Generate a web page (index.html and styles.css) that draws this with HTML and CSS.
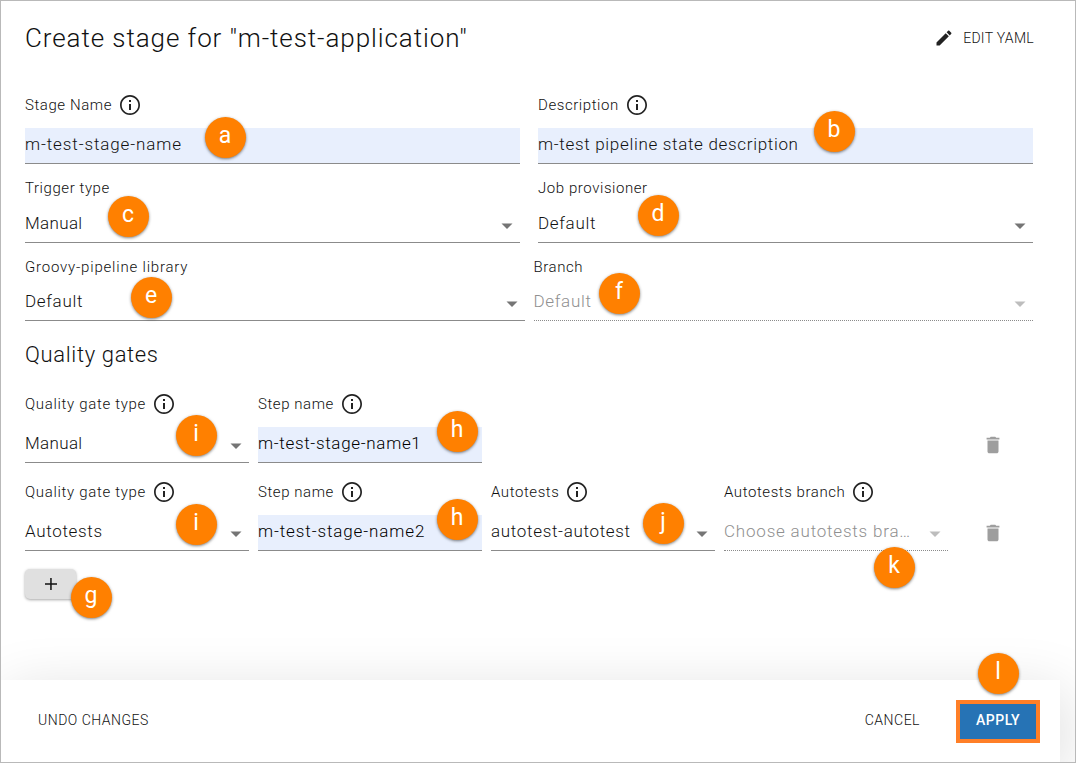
FILE: index.html
```html
<!DOCTYPE html>
<html lang="en">
<head>
<meta charset="utf-8">
<title>Create stage</title>
<link rel="stylesheet" href="styles.css">
</head>
<body>
<svg class="defs" width="0" height="0">
  <symbol id="info" viewBox="0 0 24 24"><path d="M11 7h2v2h-2zm0 4h2v6h-2zm1-9C6.48 2 2 6.48 2 12s4.480 10 10 10 10-4.480 10-10S17.520 2 12 2zm0 18.300c-4.600 0-8.300-3.700-8.300-8.300s3.700-8.300 8.300-8.300 8.300 3.700 8.300 8.300-3.700 8.300-8.300 8.300z"/></symbol>
  <symbol id="arrow" viewBox="0 0 24 24"><path d="M6.500 9.500l5.500 5.500 5.500-5.500z"/></symbol>
  <symbol id="trash" viewBox="0 0 24 24"><path d="M6 19c0 1.100.9 2 2 2h8c1.100 0 2-.9 2-2V7H6v12zM19 4h-3.500l-1-1h-5l-1 1H5v2h14V4z"/></symbol>
  <symbol id="pencil" viewBox="0 0 24 24"><path d="M3 17.250V21h3.750L17.810 9.940l-3.750-3.750L3 17.250zM20.710 7.040c.39-.39.39-1.020 0-1.410l-2.340-2.340c-.39-.39-1.020-.39-1.410 0l-1.830 1.830 3.750 3.750 1.830-1.830z"/></symbol>
</svg>
<main class="dialog">
  <header class="header">
    <h1 class="title">Create stage for "m-test-application"</h1>
    <button class="edit"><svg class="pencil"><use href="#pencil"/></svg><span>EDIT YAML</span></button>
  </header>
  <section class="form">
    <div class="row row-first">
      <div class="field"><div class="label">Stage Name<svg class="info"><use href="#info"/></svg></div><div class="control filled"><span class="t-stage">m-test-stage-name</span></div></div>
      <div class="field"><div class="label">Description<svg class="info"><use href="#info"/></svg></div><div class="control filled"><span>m-test pipeline state description</span></div></div>
    </div>
    <div class="row row-second">
      <div class="field"><div class="label">Trigger type</div><div class="control"><span class="t-short">Manual</span><svg class="arrow"><use href="#arrow"/></svg></div></div>
      <div class="field"><div class="label">Job provisioner</div><div class="control"><span>Default</span><svg class="arrow"><use href="#arrow"/></svg></div></div>
    </div>
    <div class="row row-third">
      <div class="field"><div class="label t-lib">Groovy-pipeline library</div><div class="control"><span>Default</span><svg class="arrow"><use href="#arrow"/></svg></div></div>
      <div class="field"><div class="label">Branch</div><div class="control disabled"><span>Default</span><svg class="arrow"><use href="#arrow"/></svg></div></div>
    </div>
  </section>
  <section class="gates">
    <h2 class="subtitle">Quality gates</h2>
    <div class="gate">
      <div class="field"><div class="label t-type">Quality gate type<svg class="info"><use href="#info"/></svg></div><div class="control"><span class="t-short">Manual</span><svg class="arrow"><use href="#arrow"/></svg></div></div>
      <div class="field"><div class="label">Step name<svg class="info"><use href="#info"/></svg></div><div class="control filled strong"><span>m-test-stage-name1</span></div></div>
      <svg class="trash"><use href="#trash"/></svg>
    </div>
    <div class="gate">
      <div class="field"><div class="label t-type">Quality gate type<svg class="info"><use href="#info"/></svg></div><div class="control"><span>Autotests</span><svg class="arrow"><use href="#arrow"/></svg></div></div>
      <div class="field"><div class="label">Step name<svg class="info"><use href="#info"/></svg></div><div class="control filled strong"><span class="t-stage">m-test-stage-name2</span></div></div>
      <div class="field"><div class="label">Autotests<svg class="info"><use href="#info"/></svg></div><div class="control"><span>autotest-autotest</span><svg class="arrow"><use href="#arrow"/></svg></div></div>
      <div class="field"><div class="label">Autotests branch<svg class="info"><use href="#info"/></svg></div><div class="control disabled"><span class="t-choose">Choose autotests bra…</span><svg class="arrow"><use href="#arrow"/></svg></div></div>
      <svg class="trash"><use href="#trash"/></svg>
    </div>
    <button class="add"><svg class="plus" viewBox="0 0 14 14"><path d="M6.200 1h1.500v5.200H13v1.500H7.700V13H6.200V7.700H1V6.200h5.200z"/></svg></button>
  </section>
  <footer class="footer">
    <button class="action undo">UNDO CHANGES</button>
    <button class="action cancel">CANCEL</button>
    <button class="action apply">APPLY</button>
  </footer>
  <span class="badge a">a</span><span class="badge b">b</span><span class="badge c">c</span><span class="badge d">d</span>
  <span class="badge e">e</span><span class="badge f">f</span><span class="badge g">g</span><span class="badge h1">h</span>
  <span class="badge h2">h</span><span class="badge i1">i</span><span class="badge i2">i</span><span class="badge j">j</span>
  <span class="badge k">k</span><span class="badge l">l</span>
</main>
</body>
</html>
```
FILE: styles.css
```css
* { box-sizing: border-box; }
body { margin: 0; font-family: Roboto, "Liberation Sans", sans-serif; color: #111; background: #fff; }
button { font: inherit; color: inherit; border: 0; background: none; padding: 0; }
svg { display: block; fill: currentColor; flex: none; }
.defs { position: absolute; }
.dialog { position: relative; width: 1076px; height: 763px; border: 1px solid #b9b9b9; overflow: hidden; display: flex; flex-direction: column; }
.header { height: 94px; padding: 21px 41px 0 24px; display: flex; justify-content: space-between; align-items: flex-start; }
.title { margin: 0; font-size: 26px; line-height: 32px; font-weight: 300; letter-spacing: 0.92px; white-space: nowrap; }
.edit { display: flex; align-items: center; gap: 9px; height: 32px; font-size: 14px; font-weight: 300; letter-spacing: 0.3px; }
.edit span { padding-bottom: 1px; }
.pencil { width: 20px; height: 20px; color: #222; }
.form, .gates { padding: 0 42px 0 24px; }
.row { display: grid; grid-template-columns: 1fr 1fr; column-gap: 18px; }
.row-second { margin-top: 14px; }
.row-third { margin-top: 14px; column-gap: 9px; }
.field { display: flex; flex-direction: column; min-width: 0; }
.label { height: 20px; margin-bottom: 9px; display: flex; align-items: center; gap: 6px; font-size: 15px; font-weight: 300; letter-spacing: 0.57px; white-space: nowrap; }
.row-first .label, .gate .label { margin-bottom: 13px; }
.row-third .label { margin-bottom: 8px; }
.label.t-lib { letter-spacing: 0.8px; }
.label.t-type { letter-spacing: 0.68px; }
.info { width: 24px; height: 24px; color: #222; }
.control { height: 36px; display: flex; align-items: center; justify-content: space-between; border-bottom: 1px solid #8b8b8b; font-size: 17px; font-weight: 300; letter-spacing: 0.68px; padding: 0 1px 4px 0; white-space: nowrap; }
.control.filled { background: #e8effd; background-clip: padding-box; }
.control.strong { color: #000; }
.control.disabled { border-bottom-style: dotted; color: #909090; }
.t-stage { letter-spacing: 0.89px; }
.t-short { letter-spacing: 0.35px; }
.t-choose { letter-spacing: 0.8px; }
.arrow { width: 24px; height: 24px; color: #757575; margin-top: 6px; }
.disabled .arrow { color: #bdbdbd; }
.subtitle { margin: 18px 0 23px; font-size: 22px; line-height: 32px; font-weight: 300; letter-spacing: 0.65px; }
.gate { display: grid; grid-template-columns: repeat(4, 224px) 1fr; column-gap: 9px; margin-bottom: 19px; height: 69px; }
.trash { grid-column: 5; width: 22px; height: 22px; margin: 40px 0 0 25px; color: #9e9e9e; }
.add { width: 51px; height: 30px; border-radius: 5px; background: #e0e0e0; display: grid; place-items: center; margin-top: -1px; box-shadow: 0 1px 3px rgba(0,0,0,.35); }
.plus { width: 14px; height: 14px; }
.footer { margin: auto 15px 0 0; height: 82px; background: #fff; padding: 0 20px 1px 37px; display: flex; align-items: center; box-shadow: 4px 12px 60px rgba(0,0,0,.14); }
.action { font-size: 14px; font-weight: 300; letter-spacing: .5px; padding-bottom: 1px; }
.cancel { margin-left: auto; }
.apply { width: 84px; height: 43px; margin: 1px 0 0 36px; background: #2673b5; border: 4px solid #ff7f27; color: #fff; font-weight: 500; padding-bottom: 2px; }
.badge { position: absolute; width: 41px; height: 41px; margin: -21px 0 0 -20.5px; border-radius: 50%; background: #ff8000; color: #fff; font-size: 23px; line-height: 38px; text-align: center; box-shadow: 0 1px 3px rgba(0,0,0,.5); }
.a { left: 224px; top: 136.5px; }
.b { left: 833px; top: 131px; }
.c { left: 127px; top: 216px; }
.d { left: 657px; top: 215px; }
.e { left: 150px; top: 297px; }
.f { left: 618px; top: 293px; }
.g { left: 90px; top: 597px; }
.h1 { left: 456px; top: 431px; }
.h2 { left: 456px; top: 519px; }
.i1 { left: 195px; top: 435px; }
.i2 { left: 195px; top: 524px; }
.j { left: 662px; top: 523px; }
.k { left: 893px; top: 567px; }
.l { left: 997px; top: 673px; }
```
